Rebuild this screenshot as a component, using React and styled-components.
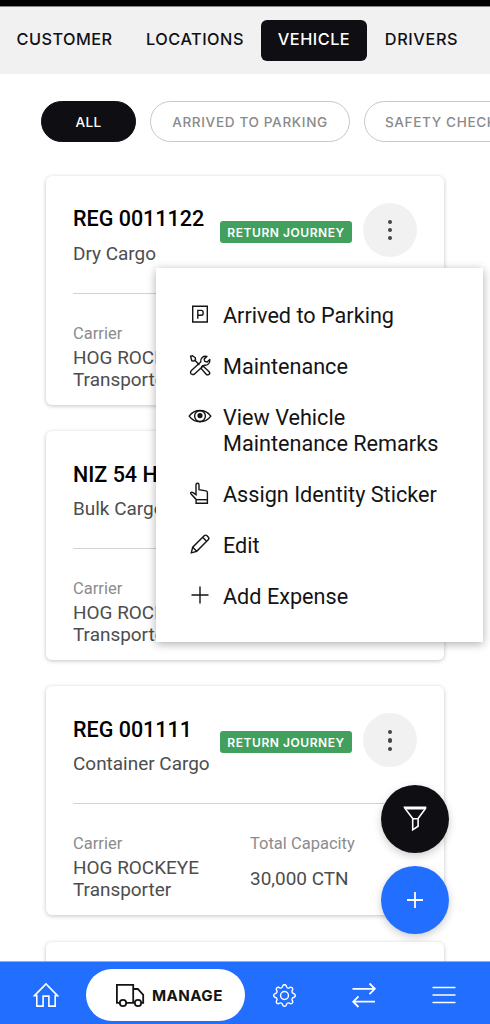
import styled, { createGlobalStyle } from "styled-components";
import { BsGear } from "react-icons/bs";

const GlobalStyle = createGlobalStyle`
  * {
    box-sizing: border-box;
  }
  body {
    margin: 0;
    background: #ffffff;
    font-family: Roboto, sans-serif;
  }
`;

const Screen = styled.div`
  position: relative;
  display: flex;
  flex-direction: column;
  width: 490px;
  height: 1024px;
  overflow: hidden;
  background: #ffffff;
`;

const StatusBar = styled.div`
  flex: none;
  height: 7px;
  background: #000000;
  border-bottom: 1px solid #858585;
`;

const TopTabs = styled.nav`
  flex: none;
  display: flex;
  align-items: center;
  height: 67px;
  background: #f1f1f1;
`;

const TopTab = styled.div`
  flex: none;
  display: flex;
  align-items: center;
  justify-content: center;
  width: ${(props) => props.$width}px;
  height: 41px;
  padding-bottom: 3px;
  border-radius: 6px;
  font-family: Inter, sans-serif;
  font-size: 16.3px;
  font-weight: 500;
  letter-spacing: ${(props) => props.$spacing}px;
  color: ${(props) => (props.$active ? "#ffffff" : "#101014")};
  background: ${(props) => (props.$active ? "#0f0f13" : "transparent")};
  white-space: nowrap;
`;

const Filters = styled.div`
  flex: none;
  display: flex;
  gap: 14px;
  padding: 27px 0 33px 41px;
`;

const Filter = styled.div`
  flex: none;
  display: flex;
  align-items: center;
  justify-content: center;
  width: ${(props) => props.$width}px;
  height: 41px;
  padding-top: 1px;
  border: 1px solid ${(props) => (props.$active ? "#0f0f13" : "#c8c8c8")};
  border-radius: 21px;
  background: ${(props) => (props.$active ? "#0f0f13" : "#ffffff")};
  color: ${(props) => (props.$active ? "#ffffff" : "#8a8a8a")};
  font-family: Inter, sans-serif;
  font-size: 13.6px;
  font-weight: 500;
  letter-spacing: ${(props) => props.$spacing}px;
  white-space: nowrap;
`;

const CardList = styled.div`
  flex: 1;
  min-height: 0;
  display: flex;
  flex-direction: column;
  gap: 26.2px;
  padding: 1px 46px 0;
`;

const Card = styled.div`
  flex: none;
  height: 229px;
  padding: 27px 27px 0;
  border-radius: 6px;
  background: #ffffff;
  box-shadow: 0 1px 4px rgba(0, 0, 0, 0.24);
`;

const CardHead = styled.div`
  display: flex;
  height: 90.6px;
  border-bottom: 1px solid #d2d2d2;
`;

const CardTitles = styled.div`
  width: 147px;
  white-space: nowrap;
`;

const RegNumber = styled.div`
  margin-top: 3.4px;
  font-size: 21.5px;
  font-weight: 500;
  line-height: 26px;
  color: #000000;
`;

const CargoType = styled.div`
  margin-top: 9.2px;
  font-size: 18.95px;
  line-height: 24px;
  color: #4d4d4d;
`;

const JourneyBadge = styled.div`
  display: flex;
  align-items: center;
  justify-content: center;
  width: 132px;
  height: 22px;
  margin-top: 18px;
  border-radius: 3px;
  background: #42a05e;
  color: #ffffff;
  font-family: Inter, sans-serif;
  font-size: 12px;
  font-weight: 600;
  letter-spacing: 0.55px;
  white-space: nowrap;
`;

const MoreButton = styled.div`
  display: flex;
  flex-direction: column;
  align-items: center;
  justify-content: center;
  gap: 4px;
  width: 54px;
  height: 54px;
  margin-left: auto;
  border-radius: 50%;
  background: #f1f1f1;
`;

const Dot = styled.span`
  width: 4.3px;
  height: 4.3px;
  border-radius: 50%;
  background: #444444;
`;

const CardDetails = styled.div`
  display: grid;
  grid-template-columns: 177px 1fr;
  padding-top: 30.4px;
`;

const DetailLabel = styled.div`
  font-size: 16.5px;
  line-height: 20px;
  color: #8c8c8c;
`;

const DetailValue = styled.div`
  margin-top: ${(props) => (props.$single ? 14 : 3)}px;
  font-size: 18.95px;
  line-height: 22px;
  color: #4d4d4d;
`;

const Menu = styled.div`
  position: absolute;
  left: 156px;
  top: 268px;
  display: flex;
  flex-direction: column;
  gap: 25.4px;
  width: 327px;
  height: 374px;
  padding: 34.5px 32px 0;
  background: #ffffff;
  box-shadow: 0 2px 9px rgba(0, 0, 0, 0.32);
`;

const MenuItem = styled.div`
  display: flex;
  gap: 11px;
  font-size: 21.65px;
  line-height: 25.8px;
  color: #141414;

  svg {
    flex: none;
    width: 24px;
    height: 24px;
    color: #141414;
  }
`;

const FloatingActions = styled.div`
  position: absolute;
  left: 381px;
  top: 785px;
  display: flex;
  flex-direction: column;
  gap: 13px;
`;

const RoundAction = styled.div`
  display: flex;
  align-items: center;
  justify-content: center;
  width: 68px;
  height: 68px;
  border-radius: 50%;
  background: ${(props) => props.$color};
  box-shadow: 0 3px 8px rgba(0, 0, 0, 0.2);
`;

const BottomBar = styled.nav`
  position: relative;
  flex: none;
  display: flex;
  align-items: center;
  height: 63px;
  padding: 4px 6px 0;
  background: #216eff;
  border-top: 1px solid #8fb0ee;
  color: #ffffff;
`;

const BarItem = styled.div`
  display: flex;
  align-items: center;
  justify-content: center;
  width: ${(props) => props.$width || 79.5}px;
`;

const ManagePill = styled.div`
  flex: none;
  display: flex;
  align-items: center;
  gap: 7px;
  width: 159px;
  height: 52px;
  padding-left: 29px;
  border-radius: 26px;
  background: #ffffff;
  color: #141414;
  font-family: Inter, sans-serif;
  font-size: 15.2px;
  font-weight: 700;
  letter-spacing: 0.4px;
`;

const stroke = { fill: "none", stroke: "currentColor", strokeWidth: 1.4 };

const ParkingIcon = () => (
  <svg viewBox="0 0 24 24" {...stroke}>
    <path d="M4.700 3.200h14.600v15.800H4.700z" />
    <path d="M9.800 15.700V7.400h3.400c1.200 0 1.900.7 1.900 1.800v1.200c0 1.100-.7 1.800-1.900 1.800H9.800" />
  </svg>
);

const ToolsIcon = () => (
  <svg viewBox="0 0 24 24" {...stroke} strokeLinejoin="round">
    <path d="M2.600 2.200l1.900-.4 2.800 2 .2 1.900-1.700 1.400-2-.4z" />
    <path d="M6.700 6l4.600 4.900M13.200 13.300l1.500-1.500 6.200 5.600c1 .9 1 2 .2 2.900-.9.900-2.100.8-2.900-.1l-5.600-6.300" />
    <path d="M4.600 20.500c-1.200-.2-2.100-1-2.100-2.100 0-.7.400-1.300.9-1.800l9.300-8.500c-.6-3.700 2.600-6.700 6.200-5.700l-2.700 2.500.5 2.500 2.500.6 2.600-2.600c.6 3.500-2.300 6.500-5.800 5.800L6.500 19.900c-.5.5-1.200.8-1.900.6z" />
  </svg>
);

const EyeIcon = () => (
  <svg viewBox="0 0 24 24" {...stroke}>
    <path d="M1.200 11.100C3.800 7.500 7.500 5.500 12 5.500s8.200 2 10.800 5.600c-2.600 3.600-6.300 5.600-10.800 5.600S3.800 14.700 1.200 11.100z" />
    <circle cx="12" cy="11.100" r="5.400" />
    <circle cx="12" cy="10.600" r="1.900" fill="currentColor" />
  </svg>
);

const HandIcon = () => (
  <svg viewBox="0 0 24 24" {...stroke}>
    <path d="M8.100 21.300v-3.900l-5-5.300c-.7-.8-.6-1.500 0-1.800.6-.3 1.300-.1 1.900.3L8 12.600V2.900c0-1 .6-1.600 1.500-1.600s1.500.6 1.500 1.600v4.700l6.900 1.300c1 .2 1.500.8 1.500 1.700v10.700z" />
    <path d="M8.100 17.700h11.300" />
  </svg>
);

const PencilIcon = () => (
  <svg viewBox="0 0 24 24" {...stroke}>
    <path d="M3.300 19.800l1.400-5.600L16.200 2.700c.8-.8 2-.8 2.800 0l1.200 1.200c.8.800.8 2 0 2.800L8.700 18.300z" />
    <path d="M4.700 14.200l4 4.100M14.600 4.300l4 4" />
  </svg>
);

const PlusIcon = () => (
  <svg viewBox="0 0 24 24" {...stroke}>
    <path d="M12 2.500v17M3.500 11h17" />
  </svg>
);

const FunnelIcon = () => (
  <svg width="26" height="28" viewBox="0 0 26 28" fill="none" stroke="#ffffff" strokeWidth="1.600">
    <path d="M2.500 2.200h21v1.200l-7.400 10.200v7.600l-5.400 3.600V13.600L3 3.400z" />
    <path d="M3 3.600h20M10.600 13.800h5.200" />
  </svg>
);

const HomeIcon = () => (
  <svg width="26" height="26" viewBox="0 0 26 26" fill="none" stroke="currentColor" strokeWidth="1.600">
    <path d="M1.500 13.600L13 2l11.500 11.600h-2.300v10.500h-6.300v-10h-5.800v10H3.800V13.600z" />
  </svg>
);

const TruckIcon = () => (
  <svg width="30" height="26" viewBox="0 0 30 26" fill="none" stroke="currentColor" strokeWidth="1.800">
    <path d="M4.800 20.800H1.900V2.800h16.300v18H11.200M18.200 7h4.600l5.400 5.800v8h-2.200M18.200 20.800h1.600" />
    <circle cx="8" cy="21" r="3.200" />
    <circle cx="23" cy="21" r="3.200" />
  </svg>
);

const SwapIcon = () => (
  <svg width="26" height="28" viewBox="0 0 26 28" fill="none" stroke="currentColor" strokeWidth="1.800">
    <path d="M1.500 7.800h22M18.500 2.500l5.300 5.300-5.300 5.300M24 20.700H2M7.500 15.400l-5.300 5.300L7.500 26" />
  </svg>
);

const ListIcon = () => (
  <svg width="24" height="20" viewBox="0 0 24 20" fill="none" stroke="currentColor" strokeWidth="1.700">
    <path d="M.5 2.500h23M.5 10h23M.5 17.500h23" />
  </svg>
);

const tabs = [
  { label: "CUSTOMER", width: 129, spacing: 0.45 },
  { label: "LOCATIONS", width: 132, spacing: 0.5 },
  { label: "VEHICLE", width: 106, spacing: 0.5, active: true },
  { label: "DRIVERS", width: 109, spacing: 0.6 },
];

const filters = [
  { label: "ALL", width: 95, spacing: 0.4, active: true },
  { label: "ARRIVED TO PARKING", width: 200, spacing: 0.63 },
  { label: "SAFETY CHECKED", width: 173, spacing: 0.63 },
];

const vehicles = [
  { reg: "REG 0011122", cargo: "Dry Cargo", returning: true },
  { reg: "NIZ 54 HOG", cargo: "Bulk Cargo", returning: true },
  { reg: "REG 001111", cargo: "Container Cargo", returning: true },
];

const actions = [
  { label: "Arrived to Parking", Icon: ParkingIcon },
  { label: "Maintenance", Icon: ToolsIcon },
  { label: "View Vehicle Maintenance Remarks", Icon: EyeIcon },
  { label: "Assign Identity Sticker", Icon: HandIcon },
  { label: "Edit", Icon: PencilIcon },
  { label: "Add Expense", Icon: PlusIcon },
];

function VehicleCard({ vehicle }) {
  return (
    <Card>
      <CardHead>
        <CardTitles>
          <RegNumber>{vehicle.reg}</RegNumber>
          <CargoType>{vehicle.cargo}</CargoType>
        </CardTitles>
        {vehicle.returning && <JourneyBadge>RETURN JOURNEY</JourneyBadge>}
        <MoreButton>
          <Dot />
          <Dot />
          <Dot />
        </MoreButton>
      </CardHead>
      <CardDetails>
        <div>
          <DetailLabel>Carrier</DetailLabel>
          <DetailValue>
            HOG ROCKEYE
            <br />
            Transporter
          </DetailValue>
        </div>
        <div>
          <DetailLabel>Total Capacity</DetailLabel>
          <DetailValue $single>30,000 CTN</DetailValue>
        </div>
      </CardDetails>
    </Card>
  );
}

export default function App() {
  return (
    <>
      <GlobalStyle />
      <Screen>
        <StatusBar />
        <TopTabs>
          {tabs.map((tab) => (
            <TopTab key={tab.label} $width={tab.width} $spacing={tab.spacing} $active={tab.active}>
              {tab.label}
            </TopTab>
          ))}
        </TopTabs>
        <Filters>
          {filters.map((item) => (
            <Filter key={item.label} $width={item.width} $spacing={item.spacing} $active={item.active}>
              {item.label}
            </Filter>
          ))}
        </Filters>
        <CardList>
          {vehicles.map((vehicle) => (
            <VehicleCard key={vehicle.reg} vehicle={vehicle} />
          ))}
          <Card />
        </CardList>
        <Menu>
          {actions.map(({ label, Icon }) => (
            <MenuItem key={label}>
              <Icon />
              <span>{label}</span>
            </MenuItem>
          ))}
        </Menu>
        <FloatingActions>
          <RoundAction $color="#0f0f13">
            <FunnelIcon />
          </RoundAction>
          <RoundAction $color="#216eff">
            <svg width="18" height="18" viewBox="0 0 18 18" stroke="#ffffff" strokeWidth="1.800">
              <path d="M9 1v16M1 9h16" />
            </svg>
          </RoundAction>
        </FloatingActions>
        <BottomBar>
          <BarItem $width={80}>
            <HomeIcon />
          </BarItem>
          <ManagePill>
            <TruckIcon />
            MANAGE
          </ManagePill>
          <BarItem>
            <BsGear size={23} />
          </BarItem>
          <BarItem>
            <SwapIcon />
          </BarItem>
          <BarItem>
            <ListIcon />
          </BarItem>
        </BottomBar>
      </Screen>
    </>
  );
}
